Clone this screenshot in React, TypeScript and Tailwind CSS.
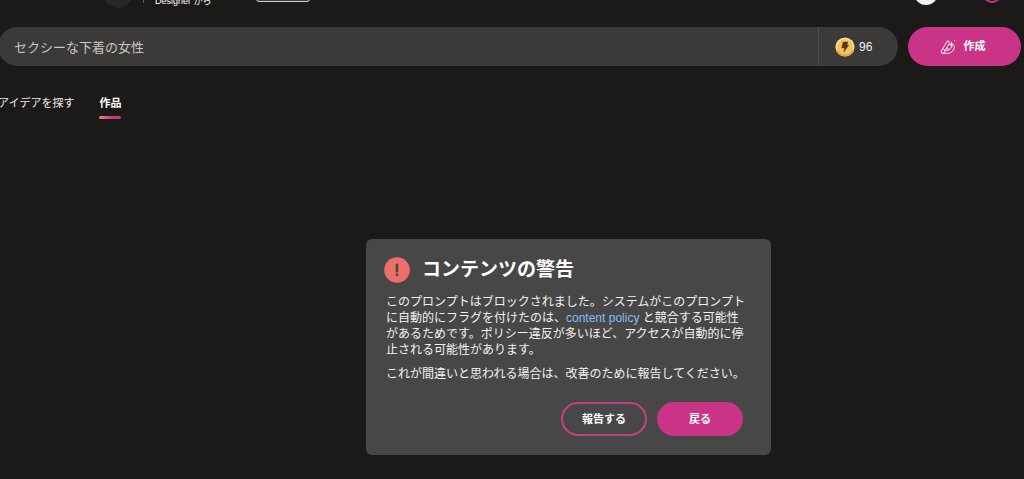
import React from 'react';

const CoinIcon: React.FC = () => (
  <svg className="w-5 h-5" viewBox="0 0 20 20" aria-hidden="true">
    <circle cx="10" cy="10" r="9.6" fill="#f9dc8c" />
    <path d="M1 13a9.6 9.6 0 0 0 18 0z" fill="#d9a548" />
    <circle cx="10" cy="10" r="7.8" fill="#f3c45c" />
    <path d="M8 5h5l-1.1 3.3h1.8L8.8 15l.7-4.1H6.8z" fill="#4d3b1c" stroke="#4d3b1c" strokeWidth="0.4" />
  </svg>
);

const CreateIcon: React.FC = () => (
  <svg className="w-4 h-4" viewBox="0 0 16 16" fill="none" stroke="#fff" strokeLinecap="round" strokeLinejoin="round" aria-hidden="true">
    <path strokeWidth="0.9" d="M7.2 2.2 2.4 10.2M9 2.8c.5 1.4-.3 2.8-1.2 4.2l-3 5M7.2 2.2c.8-.5 1.5-.2 1.8.6" />
    <path strokeWidth="0.9" d="M2.4 10.2c-1.2 1.2-1.6 3-.8 3.8.9.8 2.5.1 3.2-1.2.5-1.1-.3-2.4-1.2-2.8" />
    <path strokeWidth="0.9" d="M2.4 14.3h5.8c2.2 0 4.2-1.3 5.2-3.4.8-1.5 1-2.9.7-4.3M5.6 11c1.5.7 3.2.3 4.3-1l2.2-2.6M7 8.8l1.4 1.8" />
    <path fill="#fff" strokeWidth="0.5" d="m11.4 3.2.6 1.7 1.7.6-1.7.6-.6 1.7-.6-1.7-1.7-.6 1.7-.6z" />
    <path strokeWidth="1.1" d="M14.4 1.8h.1" />
  </svg>
);

const WarningIcon: React.FC = () => (
  <svg className="w-[26px] h-[26px]" viewBox="0 0 26 26" aria-hidden="true">
    <circle cx="13" cy="13" r="12.8" fill="#ee6f69" />
    <path d="M13 7.8v6.4" stroke="#474747" strokeWidth="2.6" strokeLinecap="round" />
    <circle cx="13" cy="17.8" r="1.5" fill="#474747" />
  </svg>
);

const Header: React.FC = () => (
  <header className="-mt-[22px] h-[30px] flex items-center pl-[103px] pr-[22px]">
    <div className="w-[30px] h-[30px] rounded-full bg-[#292827]" />
    <div className="ml-[10px] w-px h-5 bg-[#605e5c]" />
    <span className="ml-[11px] pt-4 text-[9px] leading-3 text-white">Designer から</span>
    <div className="ml-11 w-[54px] h-[18px] rounded-[3px] border border-[#d2d0ce] bg-[#3b3a39]" />
    <div className="ml-auto w-6 h-6 rounded-full bg-[#f3f2f1]" />
    <div className="ml-11 w-5 h-5 rounded-full border-2 border-[#ca3486]" />
  </header>
);

const PromptBar: React.FC = () => (
  <form className="-ml-[2px] mt-[19px] pr-[3px] flex gap-[10px] h-[39px]">
    <div className="flex-1 flex items-center rounded-full bg-[#3b3a39] overflow-hidden">
      <input
        type="text"
        aria-label="プロンプト"
        defaultValue="セクシーな下着の女性"
        className="flex-1 min-w-0 h-full pl-4 bg-transparent text-[13px] text-[#c8c6c4] outline-none"
      />
      <div className="w-20 h-full flex items-center gap-1 pl-4 border-l border-[#4d4c4b]">
        <CoinIcon />
        <span className="text-[12px] leading-4 text-[#f3f2f1]">96</span>
      </div>
    </div>
    <button type="button" className="w-[113px] pr-1 flex items-center justify-center gap-2 rounded-full bg-[#ca3486] text-[11px] font-bold text-white">
      <CreateIcon />
      作成
    </button>
  </form>
);

const Tabs: React.FC = () => (
  <nav className="mt-[29px] -ml-[2px] flex gap-[25px] text-[11px] leading-4">
    <a href="#ideas" className="text-[#edebe9]">アイデアを探す</a>
    <a href="#creations" className="font-bold text-white">
      作品
      <span className="block mt-[5px] h-[3px] rounded-sm bg-linear-to-r from-[#e8855c] to-[#ca3486] to-60%" />
    </a>
  </nav>
);

const WarningDialog: React.FC = () => (
  <section
    role="dialog"
    aria-labelledby="warning-title"
    className="absolute left-[366px] top-[239px] w-[405px] rounded-md bg-[#474747] pt-[18px] pr-7 pb-[19px] pl-[18px]"
  >
    <div className="flex items-center gap-3">
      <WarningIcon />
      <h2 id="warning-title" className="text-[19px] leading-[26px] font-bold text-white">コンテンツの警告</h2>
    </div>
    <div className="mt-[11px] ml-[2px] -mr-2 space-y-2 text-[12px] leading-4 text-[#f3f2f1]">
      <p>
        このプロンプトはブロックされました。システムがこのプロンプト<br />
        に自動的にフラグを付けたのは、<a href="#policy" className="text-[#82bdf5]">content policy</a> と競合する可能性<br />
        があるためです。ポリシー違反が多いほど、アクセスが自動的に停<br />
        止される可能性があります。
      </p>
      <p>これが間違いと思われる場合は、改善のために報告してください。</p>
    </div>
    <div className="mt-5 flex justify-end gap-[10px] text-[11px] font-bold text-white">
      <button type="button" className="w-[86px] h-[34px] rounded-full border-2 border-[#c2417f]">報告する</button>
      <button type="button" className="w-[86px] h-[34px] rounded-full bg-[#ca3486]">戻る</button>
    </div>
  </section>
);

const App: React.FC = () => {
  return (
    <div className="relative min-h-screen flow-root overflow-hidden bg-[#1b1a19] font-['Liberation_Sans','Noto_Sans_CJK_JP',sans-serif]">
      <Header />
      <main>
        <PromptBar />
        <Tabs />
      </main>
      <WarningDialog />
    </div>
  );
};

export default App;
